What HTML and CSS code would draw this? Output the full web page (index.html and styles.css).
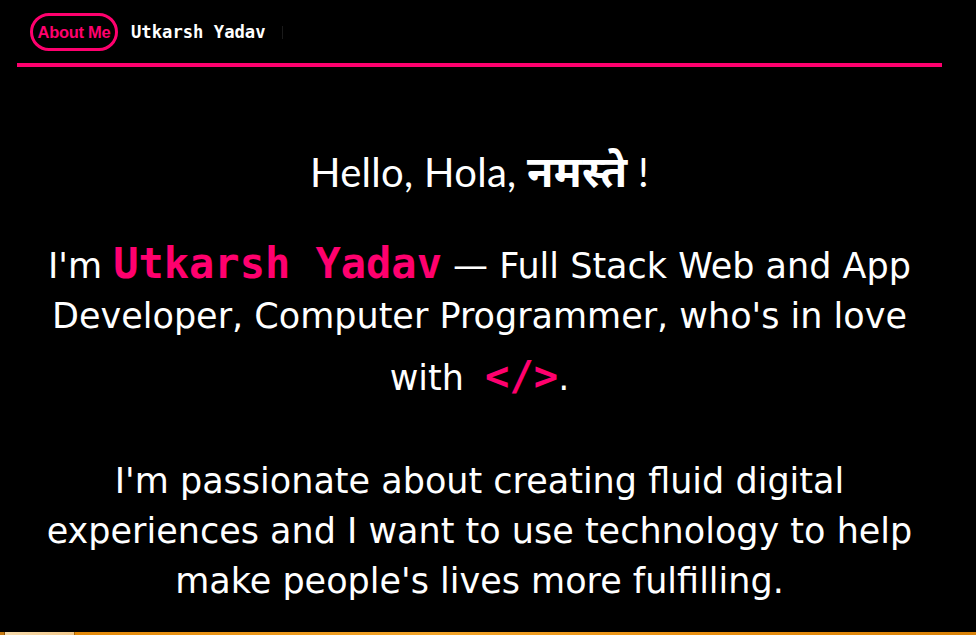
FILE: index.html
```html
<!DOCTYPE html>
<html lang="en">
<head>
<meta charset="utf-8">
<title>Utkarsh Yadav</title>
<link rel="stylesheet" href="styles.css">
</head>
<body>
<div class="page">
  <header class="nav">
    <a class="pill" href="#">About Me</a>
    <span class="brand">Utkarsh Yadav</span>
    <span class="sep"></span>
  </header>
  <div class="rule"></div>
  <main class="intro">
    <h1 class="greet">Hello, Hola, <span class="deva">नमस्ते</span> !</h1>
    <p class="lead">I'm <span class="name">Utkarsh Yadav</span> — Full Stack Web and App<br>Developer, Computer Programmer, who's in love<br>with <span class="code">&lt;/&gt;</span>.</p>
    <p class="lead second">I'm passionate about creating fluid digital<br>experiences and I want to use technology to help<br>make people's lives more fulfilling.</p>
  </main>
  <div class="taskbar"><span class="tb-edge"></span><span class="tb-start"></span><span class="tb-rest"></span></div>
</div>
</body>
</html>
```

FILE: styles.css
```css
* { box-sizing: border-box; }
html, body { margin: 0; padding: 0; background: #000; }
body { color: #fff; font-family: "DejaVu Sans", sans-serif; }

.page {
  height: 100vh;
  display: flex;
  flex-direction: column;
  overflow: hidden;
}

.nav {
  display: flex;
  align-items: center;
  gap: 13px;
  padding: 13px 0 0 30px;
  height: 51px;
}

.pill {
  display: flex;
  align-items: center;
  justify-content: center;
  width: 88px;
  height: 38px;
  border: 3px solid #ff006e;
  border-radius: 19px;
  color: #ff006e;
  text-decoration: none;
  font-family: "Liberation Sans", Arial, sans-serif;
  font-weight: 700;
  font-size: 16.5px;
  letter-spacing: -0.3px;
}

.brand {
  font-family: "DejaVu Sans Mono", "Liberation Mono", monospace;
  font-weight: 700;
  font-size: 17.2px;
  color: #fff;
}

.sep {
  width: 1px;
  height: 13px;
  background: #1a1a1a;
  margin-left: 3px;
}

.rule {
  height: 4px;
  background: #ff006e;
  margin: 12px 34px 0 17px;
}

.intro {
  width: 925px;
  margin-left: 17px;
  text-align: center;
  flex: 1;
}

.greet {
  margin: 80px 0 0;
  font-family: "Lato", "Noto Sans", sans-serif;
  font-weight: 400;
  font-size: 40px;
  line-height: 48px;
  letter-spacing: 0.3px;
}

.deva { font-weight: 700; font-size: 43px; line-height: 48px; }

.lead {
  margin: 45px 0 0;
  font-size: 35px;
  line-height: 50px;
}

.name {
  font-family: "DejaVu Sans Mono", "Liberation Mono", monospace;
  font-weight: 700;
  font-size: 42px;
  color: #ff006e;
  line-height: 40px;
}

.code {
  display: inline-block;
  padding-top: 10px;
  font-family: "DejaVu Sans Mono", "Liberation Mono", monospace;
  font-weight: 700;
  font-size: 40.5px;
  line-height: 50px;
  color: #ff006e;
  margin-left: 10px;
}

.second { margin-top: 53px; }

.taskbar {
  height: 3px;
  display: flex;
  flex-shrink: 0;
}
.tb-edge { width: 5px; background: #c77a10; border-right: 1px solid #8a5208; }
.tb-start { width: 70px; background: linear-gradient(90deg, #f7dcae, #f2c98c); border-right: 1px solid #a8680c; }
.tb-rest { flex: 1; background: linear-gradient(90deg, #e48a0a, #f3a52a 40%, #e98f10 70%, #d98208); }
```
